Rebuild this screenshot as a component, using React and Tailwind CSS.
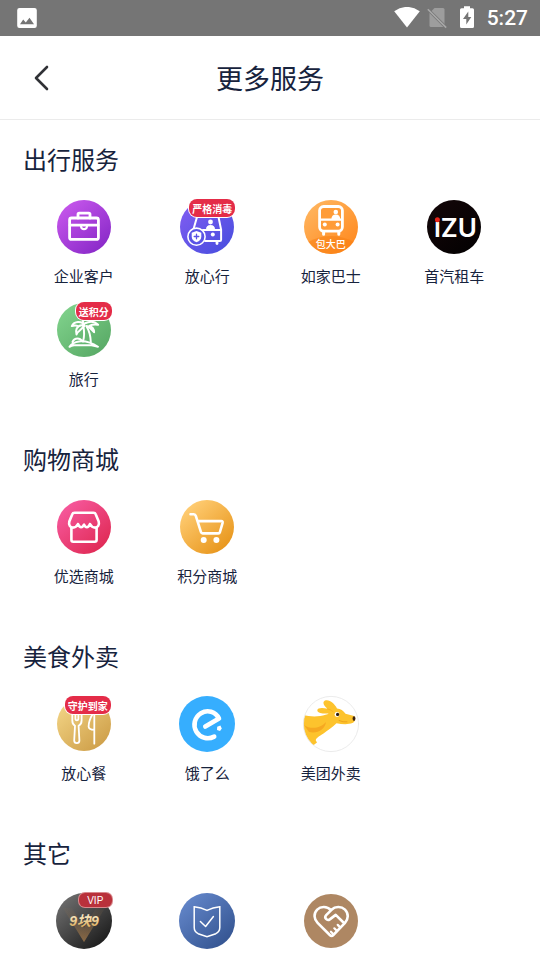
import React from "react";

function Disc({ id, from, to, r = 27, children }) {
  return (
    <svg viewBox="0 0 60 60" className="w-[60px] h-[60px]" fill="none" strokeLinecap="round" strokeLinejoin="round" aria-hidden="true">
      <defs>
        <linearGradient id={id} x1="0.15" y1="0.1" x2="0.85" y2="0.9">
          <stop offset="0" stopColor={from} />
          <stop offset="1" stopColor={to} />
        </linearGradient>
      </defs>
      <circle cx="30" cy="30" r={r} fill={`url(#${id})`} />
      {children}
    </svg>
  );
}

const BriefcaseIcon = () => (
  <Disc id="briefcase" from="#c455ea" to="#8a2ac9">
    <g stroke="#fff" strokeWidth="2.8">
      <rect x="15.6" y="21" width="28.8" height="21.4" rx="2" />
      <path d="M24 21v-3.6q0-1.2 1.2-1.2h9.6q1.2 0 1.2 1.2V21M16 28.2h28" />
      <path d="M27 28.4v1q.4 2.8 3 2.8t3-2.8v-1" strokeWidth="2.2" />
    </g>
  </Disc>
);

const SafeCarIcon = () => (
  <Disc id="safecar" from="#7d5cf0" to="#4c4fe0">
    <g stroke="#fff" strokeWidth="2">
      <path d="M20 20l-3.6 12.5M41.5 20l2.6 12.6v10.2q0 1.2-1.2 1.2H28M26 33h18" />
      <path d="M40 44.500v2" strokeWidth="2.8" />
      <circle cx="19.5" cy="39.7" r="8.6" fill="#5a54e6" strokeWidth="1.6" />
    </g>
    <circle cx="33.5" cy="25" r="2.4" fill="#fff" />
    <path d="M29 32.5q0-4.5 4.5-4.5t4.5 4.5z" fill="#fff" />
    <circle cx="35.8" cy="37.6" r="2" fill="#fff" />
    <path d="M19.5 34l4.8 1.700v4q0 3.600-4.800 5.500-4.800-1.900-4.800-5.500v-4z" fill="#fff" />
    <path d="M19.5 37.2v4.6M17.2 39.500h4.600" stroke="#5a54e6" strokeWidth="1.3" />
  </Disc>
);

const BusIcon = () => (
  <Disc id="bus" from="#ffb35c" to="#ff8a20">
    <path d="M7.5 44.8Q30 33 52.5 44.8A27 27 0 0 1 7.5 44.8z" fill="#f77f12" fillOpacity="0.55" />
    <rect x="18.6" y="9.5" width="22.8" height="24.6" rx="4" fill="#ff9c38" stroke="#fff" strokeWidth="2.8" />
    <path d="M19 22.6h22" stroke="#fff" strokeWidth="2.2" />
    <path d="M22.6 35v2.2M37.8 35v2.2" stroke="#fff" strokeWidth="3" />
    <circle cx="34.8" cy="15" r="2.3" fill="#fff" />
    <path d="M30.4 22.5q0-5 4.4-5t4.4 5z" fill="#fff" />
    <circle cx="23.8" cy="27.5" r="2" fill="#fff" />
    <circle cx="36.6" cy="27.5" r="2" fill="#fff" />
  </Disc>
);

const IzuIcon = () => (
  <Disc id="izu" from="#120608" to="#040102">
    <text x="10" y="40" fill="#fff" fontFamily="Inter, sans-serif" fontSize="26" fontWeight="600">ıZU</text>
    <circle cx="13.4" cy="22.8" r="2.5" fill="#e8231a" />
  </Disc>
);

const PalmIcon = () => (
  <Disc id="palm" from="#7ed08a" to="#5aab67">
    <g stroke="#fff" strokeWidth="2">
      <path d="M15.5 46.8q3-4.6 9.5-5.4Q34.5 40.5 44 46.8q-3-.8-6.500-1.600H20q-2.500.4-4.500 1.600z" />
      <path d="M18.500 42q1.500-3.600 5-3.600 3 0 4.500 2.600M29 41.500q2-6.500.4-15M36.800 42q-.4-9.500-4.200-15.500" />
      <path d="M30.500 25.800q-5-2-7.800 2.700-1.200 2.800-.2 6 .8-2.600 2.900-3.600l4.600-4.600M30.500 25.800q-1.500-4-6.500-3.700-4.500.4-6.200 4 3.700-1.200 6.200 0" />
      <path d="M30.500 25.800q-3-3.500-.6-6.300M30.500 23.500q8.500-4 13.600 1.300-5-.8-8.800 1 4.600 1.600 4.800 6.500-2.600-4.200-7.400-6.300" />
    </g>
  </Disc>
);

const ShopIcon = () => (
  <Disc id="shop" from="#f6589c" to="#e02a55">
    <g stroke="#fff" strokeWidth="2.6">
      <path d="M20.5 15.800h19q1.700 0 2.300 1.600l2.900 7.200c.9 3.400-1 6-3.500 6-2.400 0-4-1.200-5.200-3.600-.8 2-1.900 3.300-3.100 3.300s-2.100-1-2.900-2.600c-.8 1.600-1.700 2.600-2.900 2.600s-2.300-1.300-3.100-3.300c-1.200 2.400-2.800 3.600-5.200 3.600-2.500 0-4.400-2.600-3.500-6l2.900-7.200q.6-1.600 2.300-1.600z" />
      <path d="M17.400 30.800v12q0 1.900 1.900 1.900h21.400q1.900 0 1.900-1.900v-12" />
    </g>
  </Disc>
);

const CartIcon = () => (
  <Disc id="cart" from="#ffcd74" to="#e8961c">
    <path d="M13.5 17.3h3.3q1.500 0 2 1.600l5.200 16.300q.4 1.200 1.600 1.200h15.700q1.300 0 1.600-1.200l2.700-9.400q.4-1.700-1.300-1.700H21" stroke="#fff" strokeWidth="2.6" />
    <circle cx="26.7" cy="43" r="3" fill="#fff" />
    <circle cx="39.4" cy="43" r="3" fill="#fff" />
  </Disc>
);

const CutleryIcon = () => (
  <Disc id="cutlery" from="#f1d283" to="#cfa04a">
    <g stroke="#fff" strokeWidth="1.8">
      <path d="M18.3 20v6.500q0 3.800 2.700 5.300l-.8 14.700q0 2.600 2.600 2.600t2.600-2.600l-.8-14.700q3-1.500 3-5.300V20" />
      <path d="M21.4 20v4.500q0 1.800 1.500 1.800t1.500-1.800V20" />
      <path d="M40.3 20v29.700M38.600 20q-4 7-4 12.500 0 3.200 5.700 3.300" />
    </g>
  </Disc>
);

const ElemeIcon = () => (
  <Disc id="eleme" from="#36aefe" to="#36aefe" r={28}>
    <path d="M28.3 32.6L42 24.6C38.5 17.6 30.5 15.3 24 19.2c-6.500 4-8.400 12.300-4.600 18.600 3.800 6.200 11.500 8 17.800 4.800" stroke="#fff" strokeWidth="4.6" />
    <path d="M40.2 32.8l3.200-1.300 1.400 3-1.800 2.500-3-1z" fill="#fff" />
  </Disc>
);

const MeituanIcon = () => (
  <Disc id="meituan" from="#fff" to="#fff">
    <clipPath id="meituan-clip">
      <circle cx="30" cy="30" r="27.5" />
    </clipPath>
    <g clipPath="url(#meituan-clip)">
      <path d="M1 20.5C8 23 18 23 24.5 20.8C26 20.4 27 20 27.5 19.400C24 19.8 16.500 19.500 16.3 16.4C16.3 13.500 22 13.500 26.500 14.800C23 12 21 8.500 23.6 6.800C28 4.800 33.500 9.500 36 14.500C39.500 14.500 42.500 17 44.500 19.8L53 22C55 23.5 54.5 27.5 52 28.8C46 31 41 30 35.5 29.200C31 33.500 27 36 22.500 39.500C18 42.500 14.800 44 14.800 46.500L16 48.500L12 51.5C8 50 6 45 1 36z" fill="#fdc32d" />
      <path d="M3 31C10 36 20 34 25 28C24 35 17 40 8 38z" fill="#f6a821" />
      <path d="M26.5 14.800q3 .8 5.500 2.800" stroke="#f6ae20" strokeWidth="0.8" />
    </g>
    <circle cx="36" cy="20.5" r="2.4" fill="#fff" />
    <circle cx="36.6" cy="20.4" r="1.6" fill="#2b1a10" />
    <ellipse cx="53" cy="24.6" rx="1.4" ry="2.3" fill="#3d2413" />
    <path d="M38 26.5q4 2 8 1.400" stroke="#e99b16" strokeWidth="0.8" />
    <circle cx="30" cy="30" r="27.6" stroke="#e6e6e6" strokeWidth="0.8" />
  </Disc>
);

const NineIcon = () => (
  <Disc id="nine" from="#6c6c6c" to="#1d1d1d" r={28}>
    <defs>
      <linearGradient id="nine-gold" x1="0" y1="0" x2="0" y2="1">
        <stop offset="0" stopColor="#fff6da" />
        <stop offset="1" stopColor="#dba64a" />
      </linearGradient>
      <linearGradient id="nine-v" x1="0" y1="0" x2="0" y2="1">
        <stop offset="0" stopColor="#a87c4c" stopOpacity="0.05" />
        <stop offset="1" stopColor="#a87c4c" stopOpacity="0.5" />
      </linearGradient>
    </defs>
    <path d="M9 17h9l12 20 12-20h9L30 51z" fill="url(#nine-v)" />
    <path d="M19 33h22L30 51z" fill="url(#nine-v)" />
    <text x="30" y="35" textAnchor="middle" fill="url(#nine-gold)" fontFamily="'Liberation Sans', 'Noto Sans CJK SC', sans-serif" fontSize="14" fontWeight="700" fontStyle="italic">
      9块9
    </text>
  </Disc>
);

const ShieldIcon = () => (
  <Disc id="shield" from="#6285c8" to="#355592" r={28}>
    <g stroke="#fff" strokeWidth="1.5">
      <path d="M17.2 15.8q7 .6 12.8 3.600 5.800-3 12.800-3.600v20.700q0 4-4 6.200L30 45.8l-8.800-3.100q-4-2.200-4-6.200z" strokeLinejoin="miter" />
      <path d="M23.4 30.5l5.200 5 7.800-10" />
    </g>
  </Disc>
);

const HandshakeIcon = () => (
  <Disc id="handshake" from="#ae8763" to="#ae8763">
    <g stroke="#fff" strokeWidth="2.6">
      <path d="M30 19.2c-4-4.200-10.300-4-13.800-.6-3.800 3.900-3.400 9.500.4 13.300L28.8 44q1.800 1.800 3.500 0L44 31.800c3.500-3.800 3.800-9.400 0-13.200-3.700-3.500-9.800-3.400-13.500.2l-5.300 5.400c-2.500 2.700.8 6 3.600 4.200l5.900-4.500 8.800 8.600" />
      <path d="M39.2 36.4l-2.500-2.500M35.800 39.8l-2.500-2.500M32.400 43.200l-2.500-2.500" strokeWidth="2.2" />
    </g>
  </Disc>
);

const redBadge = "top-[2px] bg-[#e42c48] ring-[1px] ring-white h-[18px] px-[3px] text-[10px] font-bold text-white";

const sections = [
  {
    title: "出行服务",
    items: [
      { name: "企业客户", icon: BriefcaseIcon },
      { name: "放心行", icon: SafeCarIcon, badge: "严格消毒", badgeClass: `${redBadge} right-[2px] rounded-lg` },
      { name: "如家巴士", icon: BusIcon, caption: "包大巴" },
      { name: "首汽租车", icon: IzuIcon },
      { name: "旅行", icon: PalmIcon, badge: "送积分", badgeClass: `${redBadge} right-[2px] rounded-lg` },
    ],
  },
  {
    title: "购物商城",
    items: [
      { name: "优选商城", icon: ShopIcon },
      { name: "积分商城", icon: CartIcon },
    ],
  },
  {
    title: "美食外卖",
    items: [
      { name: "放心餐", icon: CutleryIcon, badge: "守护到家", badgeClass: `${redBadge} right-[3px] rounded-lg` },
      { name: "饿了么", icon: ElemeIcon },
      { name: "美团外卖", icon: MeituanIcon },
    ],
  },
  {
    title: "其它",
    items: [
      { icon: NineIcon, badge: "VIP", badgeClass: "top-[2px] right-[2px] h-[14px] w-[33px] rounded-md bg-[#b9313b] ring-[1px] ring-[#d8898d] font-['Liberation_Sans',sans-serif] text-[10px] text-white" },
      { icon: ShieldIcon },
      { icon: HandshakeIcon },
    ],
  },
];

function ServiceItem({ name, icon: Icon, badge, badgeClass, caption }) {
  return (
    <button type="button" className="flex flex-col items-center gap-[7px]">
      <span className="relative block">
        <Icon />
        {badge && (
          <span className={`absolute flex items-center justify-center whitespace-nowrap ${badgeClass}`}>{badge}</span>
        )}
        {caption && (
          <span className="absolute inset-x-0 bottom-[5px] text-center text-[10px] leading-4 font-medium text-white">{caption}</span>
        )}
      </span>
      {name && <span className="text-[15px] leading-6">{name}</span>}
    </button>
  );
}

function StatusBar() {
  return (
    <div className="flex h-9 shrink-0 items-center bg-[#757575] pr-3 pl-4 text-white">
      <svg viewBox="0 0 22 22" className="h-[22px] w-[22px]" aria-hidden="true">
        <path d="M3.5 1h15q2.3 0 2.3 2.300v15.400q0 2.300-2.300 2.300h-15q-2.300 0-2.300-2.300V3.300Q1.200 1 3.500 1zM4 17.300h14l-4.500-6.500-3.700 4.700-2.600-3z" fill="#fff" fillRule="evenodd" />
      </svg>
      <div className="ml-auto flex items-center">
        <svg viewBox="0 0 26 22" className="h-[22px] w-[26px]" aria-hidden="true">
          <path d="M13 20.5L.2 4.300Q13-4.500 25.800 4.300z" fill="#fff" />
        </svg>
        <svg viewBox="0 0 20 22" className="ml-[7px] h-[22px] w-5" aria-hidden="true">
          <path d="M7.5 1H16q1.500 0 1.500 1.500v16q0 1.500-1.500 1.500H4q-1.500 0-1.500-1.500V6z" fill="#9d9d9d" />
          <path d="M.8 2.200l18.400 18.400" stroke="#757575" strokeWidth="3" />
          <path d="M.8 2.200l18.400 18.400" stroke="#a8a8a8" strokeWidth="1.600" />
        </svg>
        <svg viewBox="0 0 16 22" className="ml-3 h-[22px] w-4 overflow-visible" aria-hidden="true">
          <path d="M5-.8h6v2h2.500Q15 1.200 15 2.700v16.800q0 1.500-1.500 1.500h-11Q1 21 1 19.500V2.700Q1 1.200 2.500 1.200H5zM9.300 4.500L4 12h3.300v5.500L12.300 10H9.300z" fill="#fff" fillRule="evenodd" />
        </svg>
        <span className="ml-3 font-[Roboto,sans-serif] text-[21px] leading-9 font-medium">5:27</span>
      </div>
    </div>
  );
}

export default function App() {
  return (
    <div className="flex h-screen flex-col bg-white font-['Noto_Sans_CJK_SC',sans-serif] text-[#17233d]">
      <StatusBar />

      <header className="grid h-[84px] shrink-0 grid-cols-[60px_1fr_60px] items-center border-b border-[#ebebeb]">
        <button type="button" aria-label="返回" className="flex h-full items-center justify-center pl-6">
          <svg viewBox="0 0 18 28" className="h-7 w-[18px]" fill="none" stroke="#303236" strokeWidth="2.6" strokeLinecap="round" strokeLinejoin="round">
            <path d="M14 3L3 14l11 11" />
          </svg>
        </button>
        <h1 className="text-center text-[27px] leading-10">更多服务</h1>
      </header>

      <main className="min-h-0 flex-1 overflow-y-auto [scrollbar-width:none]">
        {sections.map((section) => (
          <section key={section.title} className="pt-[21px] pr-6 pb-[29px] pl-[22px]">
            <h2 className="pl-px text-2xl leading-9">{section.title}</h2>
            <div className="mt-5 grid grid-cols-4 gap-y-3">
              {section.items.map((item, index) => (
                <ServiceItem key={index} {...item} />
              ))}
            </div>
          </section>
        ))}
      </main>
    </div>
  );
}
